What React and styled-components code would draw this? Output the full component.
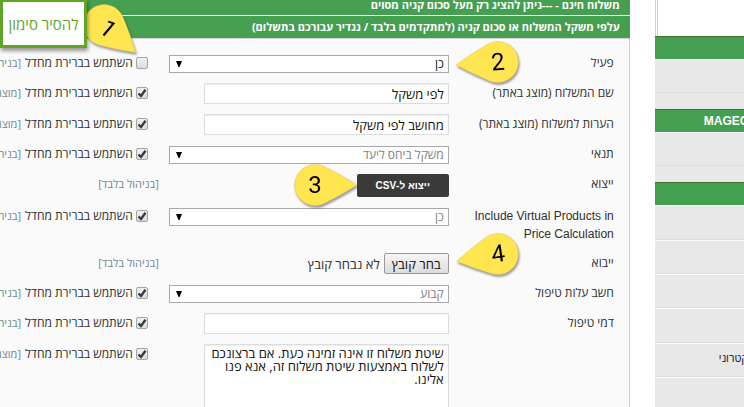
import React, { useId, useRef } from "react";
import styled, { createGlobalStyle, css } from "styled-components";

const hebrew = '"Open Sans", "Liberation Sans", Arial, sans-serif';
const latin = '"Liberation Sans", Arial, sans-serif';

const GlobalStyle = createGlobalStyle`
  * { box-sizing: border-box; }
  html { overflow: hidden; }
  body {
    margin: 0;
    background: #fff;
    color: #2f2f2f;
    font: 12px/18px ${hebrew};
  }
`;

const Page = styled.div`
  position: relative;
  display: flex;
  align-items: stretch;
  gap: 25px;
  height: 100vh;
  overflow: hidden;
`;

const Main = styled.main`
  flex: 1;
  min-width: 0;
  display: flex;
  flex-direction: column;
  overflow: hidden;
`;

const SectionHead = styled.h2`
  flex: none;
  margin: 0;
  padding: ${(p) => (p.$cut ? "0 10px 1px" : "0 10px")};
  height: ${(p) => (p.$cut ? "16px" : "22px")};
  display: flex;
  align-items: ${(p) => (p.$cut ? "flex-end" : "center")};
  background: #44a050;
  border-bottom: ${(p) => (p.$cut ? "1px solid #fff" : "0")};
  color: #fff;
  font-size: 11px;
  line-height: 18px;
  font-weight: bold;
  white-space: nowrap;
`;

const Fieldset = styled.form`
  flex: 1;
  padding: 10px 15px 0 0;
  background: #fafafa;
  border-top: 1px solid #d6d6d6;
  border-right: 1px solid #ccc;
`;

const Row = styled.div`
  display: grid;
  grid-template-columns: 165px 280px minmax(0, 1fr);
  align-items: start;
  padding: ${(p) => (p.$select ? "6px 0 5px" : "5px 0")};
`;

const labelText = css`
  margin-top: ${(p) => (p.$select ? "-1px" : "1px")};
`;

const RowLabel = styled.label`
  ${labelText}
  padding-left: 15px;
  font-family: ${(p) => (p.$latin ? latin : hebrew)};
`;

const Value = styled.div`
  display: flex;
  align-items: center;
  gap: 4px;
  font-size: 13px;
`;

const Aside = styled.div`
  ${labelText}
  display: flex;
  align-items: center;
  padding-right: ${(p) => (p.$bare ? "10px" : "21px")};
  height: 18px;
  white-space: nowrap;
`;

const Scope = styled.span`
  color: #6f8992;
  font-size: 11px;
  flex: none;
`;

const DefaultLabel = styled.label`
  display: flex;
  flex: none;
  align-items: center;
  gap: 3px;
  margin-left: 4px;
`;

const Check = styled.input`
  appearance: none;
  width: 12px;
  height: 12px;
  margin: 0;
  border: 1px solid #a5a5a5;
  border-radius: 2px;
  background: linear-gradient(#f0f0f0, #dcdcdc);
`;

const CheckBox = styled.span`
  position: relative;
  display: flex;
`;

const Tick = styled.svg`
  position: absolute;
  inset: 0;
  pointer-events: none;
  display: none;
  ${Check}:checked + & { display: block; }
`;

const SelectBox = styled.div`
  position: relative;
  width: 100%;
  display: flex;
`;

const Select = styled.select`
  appearance: none;
  width: 100%;
  height: 18px;
  margin: 0;
  padding: 0 4px 0 20px;
  border: 1px solid #a9a9a9;
  border-radius: 0;
  background: #fff;
  color: ${(p) => (p.disabled ? "#808080" : "#111")};
  opacity: 1;
  font: 12px/16px ${hebrew};
`;

const Arrow = styled.svg`
  position: absolute;
  left: 7px;
  top: 6px;
  pointer-events: none;
`;

const fieldLook = css`
  width: 245px;
  margin: 0;
  padding: 1px 4px;
  border: 1px solid #ddd;
  border-radius: 0;
  background: #fff;
  box-shadow: inset 0 1px 1px #eee;
  color: #111;
`;

const TextInput = styled.input`
  ${fieldLook}
  height: 21px;
  font: 13px/16px ${hebrew};
`;

const TextArea = styled.textarea`
  ${fieldLook}
  height: 84px;
  padding-top: 2px;
  resize: none;
  font: 13px/13px ${hebrew};
`;

const DarkButton = styled.button`
  width: 92px;
  height: 23px;
  padding: 0;
  border: 0;
  border-radius: 2px;
  background: #3a3a3a;
  color: #fff;
  font: bold 10px/22px ${latin};
`;

const FileButton = styled.button`
  width: 65px;
  height: 21px;
  padding: 0;
  border: 1px solid #999;
  border-radius: 2px;
  background: linear-gradient(#f6f6f6, #dcdcdc);
  color: #111;
  font: 13px/18px ${hebrew};
`;

const Side = styled.aside`
  flex: none;
  width: 12%;
  display: flex;
  flex-direction: column;
  overflow: hidden;
  direction: ltr;
`;

const SideTop = styled.div`
  flex: none;
  height: 36px;
  border-left: 3px double #d0d0d0;
`;

const SideHead = styled.h3`
  flex: none;
  height: 24px;
  margin: 0;
  padding-left: 49px;
  background: #44a050;
  border-top: 1px solid #3f6f2c;
  border-bottom: 1px solid #fff;
  color: #fff;
  font: bold 12px/22px ${latin};
  white-space: nowrap;
`;

const SideItem = styled.div`
  flex: none;
  height: ${(p) => p.$height}px;
  padding-left: 64px;
  background: #e8e8e8;
  border-bottom: 1px solid #ddd;
  color: #111;
  font-size: 11px;
  line-height: 28px;
  white-space: nowrap;
  & + & { border-top: 1px solid #fafafa; }
`;

const SideGap = styled.div`
  flex: none;
  height: 16px;
  background: #e8e8e8;
`;

const Note = styled.div`
  position: absolute;
  left: 0;
  top: -1px;
  width: 87px;
  height: 49px;
  display: flex;
  align-items: center;
  justify-content: center;
  border: 3px solid #62a526;
  background: #fff;
  box-shadow: 1px 3px 4px rgba(0, 0, 0, 0.4);
  color: #62a526;
  font-size: 15px;
  white-space: nowrap;
`;

const Pin = styled.svg`
  position: absolute;
  left: ${(p) => p.$x}px;
  top: ${(p) => p.$y}px;
  overflow: visible;
  pointer-events: none;
  filter: drop-shadow(1px 2px 1px rgba(0, 0, 0, 0.4));
`;

const Digit = styled.text`
  font: 24px Roboto, ${latin};
  text-anchor: middle;
  direction: ltr;
  fill: #000;
`;

// x, y: centre of the round end; angle: where the tip points, clockwise from the right
function Callout({ x, y, angle, turn = 0, shift = 0, children }) {
  return (
    <Pin $x={x - 20} $y={y - 20} width="40" height="40" viewBox="-20 -20 40 40">
      <path
        transform={`rotate(${angle})`}
        d="M42 0 Q28 -9 10 -18 A20.5 20.5 0 1 0 10 18 Q28 9 42 0 Z"
        fill="#ffe550"
        stroke="#dcc75c"
        strokeWidth="0.5"
      />
      <Digit y="8" transform={`translate(${shift} ${shift}) rotate(${turn})`}>{children}</Digit>
    </Pin>
  );
}

function UseDefault({ checked = true }) {
  return (
    <DefaultLabel>
      <CheckBox>
        <Check type="checkbox" defaultChecked={checked} />
        <Tick width="12" height="12" viewBox="0 0 12 12">
          <path d="M2.5 6.5 L5 9 L9.5 2.8" fill="none" stroke="#3b3b3b" strokeWidth="2.4" />
        </Tick>
      </CheckBox>
      השתמש בברירת מחדל
    </DefaultLabel>
  );
}

function Field({ label, latinLabel, select, scope, checked, bare, render }) {
  const id = useId();
  return (
    <Row $select={select}>
      <RowLabel htmlFor={id} $select={select} $latin={latinLabel}>{label}</RowLabel>
      <Value>{render(id)}</Value>
      <Aside $select={select} $bare={bare}>
        {!bare && <UseDefault checked={checked} />}
        <Scope>{scope}</Scope>
      </Aside>
    </Row>
  );
}

function DropDown({ id, value, disabled }) {
  return (
    <SelectBox>
      <Select id={id} disabled={disabled} defaultValue={value}>
        <option>{value}</option>
      </Select>
      <Arrow width="6" height="6" viewBox="0 0 6 6">
        <path d="M0 0H6L3.5 6H2.5Z" fill="#000" />
      </Arrow>
    </SelectBox>
  );
}

function FilePicker({ id }) {
  const file = useRef(null);
  return (
    <>
      <FileButton id={id} type="button" onClick={() => file.current.click()}>בחר קובץ</FileButton>
      <span>לא נבחר קובץ</span>
      <input ref={file} type="file" hidden />
    </>
  );
}

const ADMIN = "[בניהול בלבד]";
const SITE = "[מוצג באתר]";

export default function App() {
  return (
    <>
      <GlobalStyle />
      <Page dir="rtl">
        <Side>
          <SideTop />
          <SideHead />
          <SideItem $height={33} />
          <SideGap />
          <SideHead>MAGEC</SideHead>
          <SideItem $height={33} />
          <SideGap />
          <SideHead />
          <SideItem $height={34} />
          <SideItem $height={34} />
          <SideItem $height={34} />
          <SideItem $height={35} />
          <SideItem $height={34}><bdi>קטרוני</bdi></SideItem>
          <SideItem $height={34} />
        </Side>
        <Main>
          <SectionHead $cut>משלוח חינם - ---ניתן להציג רק מעל סכום קניה מסוים</SectionHead>
          <SectionHead>עלפי משקל המשלוח או סכום קניה (למתקדמים בלבד / נגדיר עבורכם בתשלום)</SectionHead>
          <Fieldset>
            <Field select label="פעיל" scope={ADMIN} checked={false}
              render={(id) => <DropDown id={id} value="כן" />} />
            <Field label="שם המשלוח (מוצג באתר)" scope={SITE}
              render={(id) => <TextInput id={id} defaultValue="לפי משקל" />} />
            <Field label="הערות למשלוח (מוצג באתר)" scope={SITE}
              render={(id) => <TextInput id={id} defaultValue="מחושב לפי משקל" />} />
            <Field select label="תנאי" scope={ADMIN}
              render={(id) => <DropDown id={id} value="משקל ביחס ליעד" disabled />} />
            <Field bare label="ייצוא" scope={ADMIN}
              render={(id) => <DarkButton id={id} type="button">ייצוא ל-CSV</DarkButton>} />
            <Field select latinLabel label="Include Virtual Products in Price Calculation" scope={ADMIN}
              render={(id) => <DropDown id={id} value="כן" disabled />} />
            <Field bare label="ייבוא" scope={ADMIN}
              render={(id) => <FilePicker id={id} />} />
            <Field select label="חשב עלות טיפול" scope={ADMIN}
              render={(id) => <DropDown id={id} value="קבוע" disabled />} />
            <Field label="דמי טיפול" scope={ADMIN}
              render={(id) => <TextInput id={id} />} />
            <Field scope={SITE}
              render={(id) => (
                <TextArea
                  id={id}
                  aria-label="הודעת שגיאה"
                  defaultValue="שיטת משלוח זו אינה זמינה כעת. אם ברצונכם לשלוח באמצעות שיטת משלוח זה, אנא פנו אלינו."
                />
              )} />
          </Fieldset>
        </Main>
        <Callout x={104} y={25} angle={41} turn={40} shift={4}>1</Callout>
        <Callout x={498} y={62} angle={176} turn={-4}>2</Callout>
        <Callout x={315} y={185} angle={0}>3</Callout>
        <Callout x={498} y={254} angle={170} turn={-8}>4</Callout>
        <Note>להסיר סימון</Note>
      </Page>
    </>
  );
}
